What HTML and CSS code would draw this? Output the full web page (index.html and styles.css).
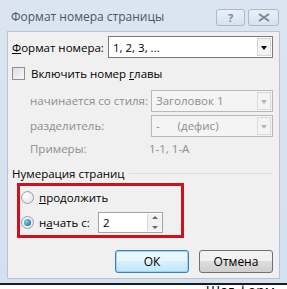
FILE: index.html
```html
<!DOCTYPE html>
<html lang="ru">
<head>
  <meta charset="UTF-8">
  <title>Формат номера страницы</title>
  <link rel="stylesheet" href="styles.css">
</head>
<body>

  <div class="window">
    <div class="titlebar">
      <span class="title">Формат номера страницы</span>
      <div class="caption-buttons">
        <span class="cap-btn help">?</span>
        <span class="cap-btn close">
          <svg width="12" height="9" viewBox="0 0 12 9"><path d="M1 1 L11 8 M11 1 L1 8" stroke="#7a8899" stroke-width="2" fill="none"/></svg>
        </span>
      </div>
    </div>

    <div class="client">
      <div class="row first">
        <span class="label wide"><u>Ф</u>ормат номера:</span>
        <div class="select">
          <span class="value">1, 2, 3, ...</span>
          <span class="arrow"></span>
        </div>
      </div>

      <div class="row check">
        <span class="checkbox"></span>
        <span>Включить номер <u>г</u>лавы</span>
      </div>

      <div class="row sub">
        <span class="label dim indent">начинается со стиля:</span>
        <div class="select small disabled">
          <span class="value">Заголовок 1</span>
          <span class="arrow"></span>
        </div>
      </div>

      <div class="row sub second">
        <span class="label dim indent">разделитель:</span>
        <div class="select small disabled">
          <span class="value">-&nbsp;&nbsp;&nbsp;&nbsp;&nbsp;&nbsp;(дефис)</span>
          <span class="arrow"></span>
        </div>
      </div>

      <div class="row examples">
        <span class="label dim indent">Примеры:</span>
        <span class="dim sample">1-1, 1-A</span>
      </div>

      <div class="group-title">
        <span>Нумерация страниц</span>
        <span class="line"></span>
      </div>

      <div class="highlight">
        <div class="radio-row">
          <span class="radio"></span>
          <span><u>п</u>родолжить</span>
        </div>
        <div class="radio-row">
          <span class="radio on"></span>
          <span class="radio-label">н<u>а</u>чать с:</span>
          <div class="spin">
            <span class="value">2</span>
            <span class="spin-btns">
              <span class="up"></span>
              <span class="down"></span>
            </span>
          </div>
        </div>
      </div>

      <div class="buttons">
        <button class="btn default">ОК</button>
        <button class="btn">Отмена</button>
      </div>
    </div>
  </div>

  <div class="doc">
    <span>Шаг форм</span>
  </div>

</body>
</html>
```

FILE: styles.css
```css
body {
  margin: 0;
  padding: 0;
  width: 287px;
  height: 289px;
  overflow: hidden;
  background: #ffffff;
  font-family: 'Open Sans', 'Noto Sans', sans-serif;
  font-size: 11.5px;
  color: #000;
  white-space: nowrap;
}

.window {
  height: 283px;
  box-sizing: border-box;
  background: linear-gradient(#dbe5f2, #d3e0ef);
  padding: 0 7px 4px 7px;
  display: flex;
  flex-direction: column;
}

.titlebar {
  height: 31px;
  flex-shrink: 0;
  display: flex;
  align-items: flex-start;
  justify-content: space-between;
}

.title {
  margin-top: 8px;
  margin-left: 4px;
  color: #4a5566;
  font-size: 12px;
}

.caption-buttons {
  display: flex;
  gap: 3px;
  margin-top: 9px;
  margin-right: 1px;
}

.cap-btn {
  height: 15px;
  border: 1px solid #a9b8cb;
  border-radius: 3px;
  background: linear-gradient(#e9eff7, #d7e2ef);
  display: flex;
  align-items: center;
  justify-content: center;
  color: #7a8899;
  font-weight: bold;
  font-size: 11px;
}

.help {
  width: 27px;
}

.close {
  width: 29px;
}

.client {
  flex: 1;
  min-height: 0;
  background: #f0f0f0;
  border: 1px solid #b6c4d6;
  display: flex;
  flex-direction: column;
  padding: 0 6px 0 4px;
}

.row {
  display: flex;
  align-items: center;
  flex-shrink: 0;
}

.first {
  margin-top: 4px;
  height: 22px;
}

.label.wide {
  width: 96px;
}

.select {
  flex: 1;
  height: 20px;
  background: #fff;
  border: 1px solid #7a7a7a;
  display: flex;
  align-items: center;
  justify-content: space-between;
}

.select .value {
  padding-left: 4px;
}

.arrow {
  width: 14px;
  height: 18px;
  margin-right: 1px;
  border: 1px solid #d6d6d6;
  box-sizing: border-box;
  position: relative;
  background: #f4f4f4;
}

.arrow::after {
  content: "";
  position: absolute;
  left: 3px;
  top: 7px;
  border-left: 3px solid transparent;
  border-right: 3px solid transparent;
  border-top: 4px solid #000;
}

.check {
  margin-top: 8px;
  height: 14px;
  gap: 6px;
}

.checkbox {
  width: 11px;
  height: 11px;
  border: 1px solid #8e8f8f;
  background: linear-gradient(135deg, #dcdcdc, #fafafa);
}

.sub {
  margin-top: 10px;
  height: 21px;
}

.sub.second {
  margin-top: 4px;
}

.indent {
  padding-left: 18px;
}

.sub .label {
  width: 122px;
}

.dim {
  color: #8d8d8d;
}

.select.disabled {
  flex: none;
  width: 120px;
  background: #f4f4f4;
  border-color: #b8b8b8;
}

.select.disabled .value {
  color: #8d8d8d;
}

.select.disabled .arrow {
  background: #f4f4f4;
  border-color: #dadada;
}

.select.disabled .arrow::after {
  border-top-color: #b5b5b5;
}

.examples {
  margin-top: 2px;
  height: 20px;
}

.examples .label {
  width: 119px;
}

.group-title {
  margin-top: 5px;
  height: 20px;
  flex-shrink: 0;
  display: flex;
  align-items: center;
  gap: 4px;
}

.group-title .line {
  flex: 1;
  height: 1px;
  background: #d5dfe5;
}

.highlight {
  margin-left: 5px;
  width: 161px;
  height: 48px;
  flex-shrink: 0;
  border: 3px solid #d0101c;
  display: flex;
  flex-direction: column;
  padding-top: 1px;
  box-sizing: content-box;
}

.radio-row {
  display: flex;
  align-items: center;
  height: 21px;
  gap: 5px;
  padding-left: 1px;
}

.radio {
  width: 11px;
  height: 11px;
  border-radius: 50%;
  border: 1px solid #9aa0a6;
  background: radial-gradient(circle at 40% 40%, #ffffff, #d9dde2);
  position: relative;
}

.radio.on::after {
  content: "";
  position: absolute;
  left: 2px;
  top: 2px;
  width: 7px;
  height: 7px;
  border-radius: 50%;
  background: radial-gradient(circle at 35% 35%, #7fd0f5, #1a5d8f);
}

.radio-row + .radio-row {
  margin-top: 4px;
}

.radio-label {
  width: 54px;
}

.spin {
  width: 63px;
  height: 19px;
  background: #fff;
  border: 1px solid #a4a4a4;
  display: flex;
  justify-content: space-between;
  align-items: center;
}

.spin .value {
  padding-left: 4px;
}

.spin-btns {
  width: 14px;
  height: 17px;
  display: flex;
  flex-direction: column;
  border-left: 1px solid #d8d8d8;
  background: #f2f2f2;
}

.spin-btns span {
  flex: 1;
  position: relative;
}

.up::after,
.down::after {
  content: "";
  position: absolute;
  left: 4px;
  border-left: 3px solid transparent;
  border-right: 3px solid transparent;
}

.up::after {
  top: 2px;
  border-bottom: 3px solid #606a74;
}

.down::after {
  top: 3px;
  border-top: 3px solid #606a74;
}

.buttons {
  margin-top: 12px;
  display: flex;
  justify-content: flex-end;
  gap: 10px;
}

.btn {
  width: 74px;
  height: 23px;
  font-family: 'Open Sans', 'Noto Sans', sans-serif;
  font-size: 12px;
  border: 1px solid #707070;
  border-radius: 3px;
  background: linear-gradient(#f2f2f2 50%, #dddddd 50%, #cfcfcf);
  padding: 0;
  color: #000;
}

.btn.default {
  border-color: #3c7fb1;
  box-shadow: inset 0 0 0 1px #9ed3f3;
  background: linear-gradient(#eaf6fd 50%, #d9f0fc 50%, #bee6fd);
}

.doc {
  border-top: 2px solid #1c1c1c;
  height: 6px;
  position: relative;
}

.doc span {
  position: absolute;
  right: 12px;
  top: -1px;
  font-size: 14px;
  line-height: 14px;
  color: #000;
}
```
